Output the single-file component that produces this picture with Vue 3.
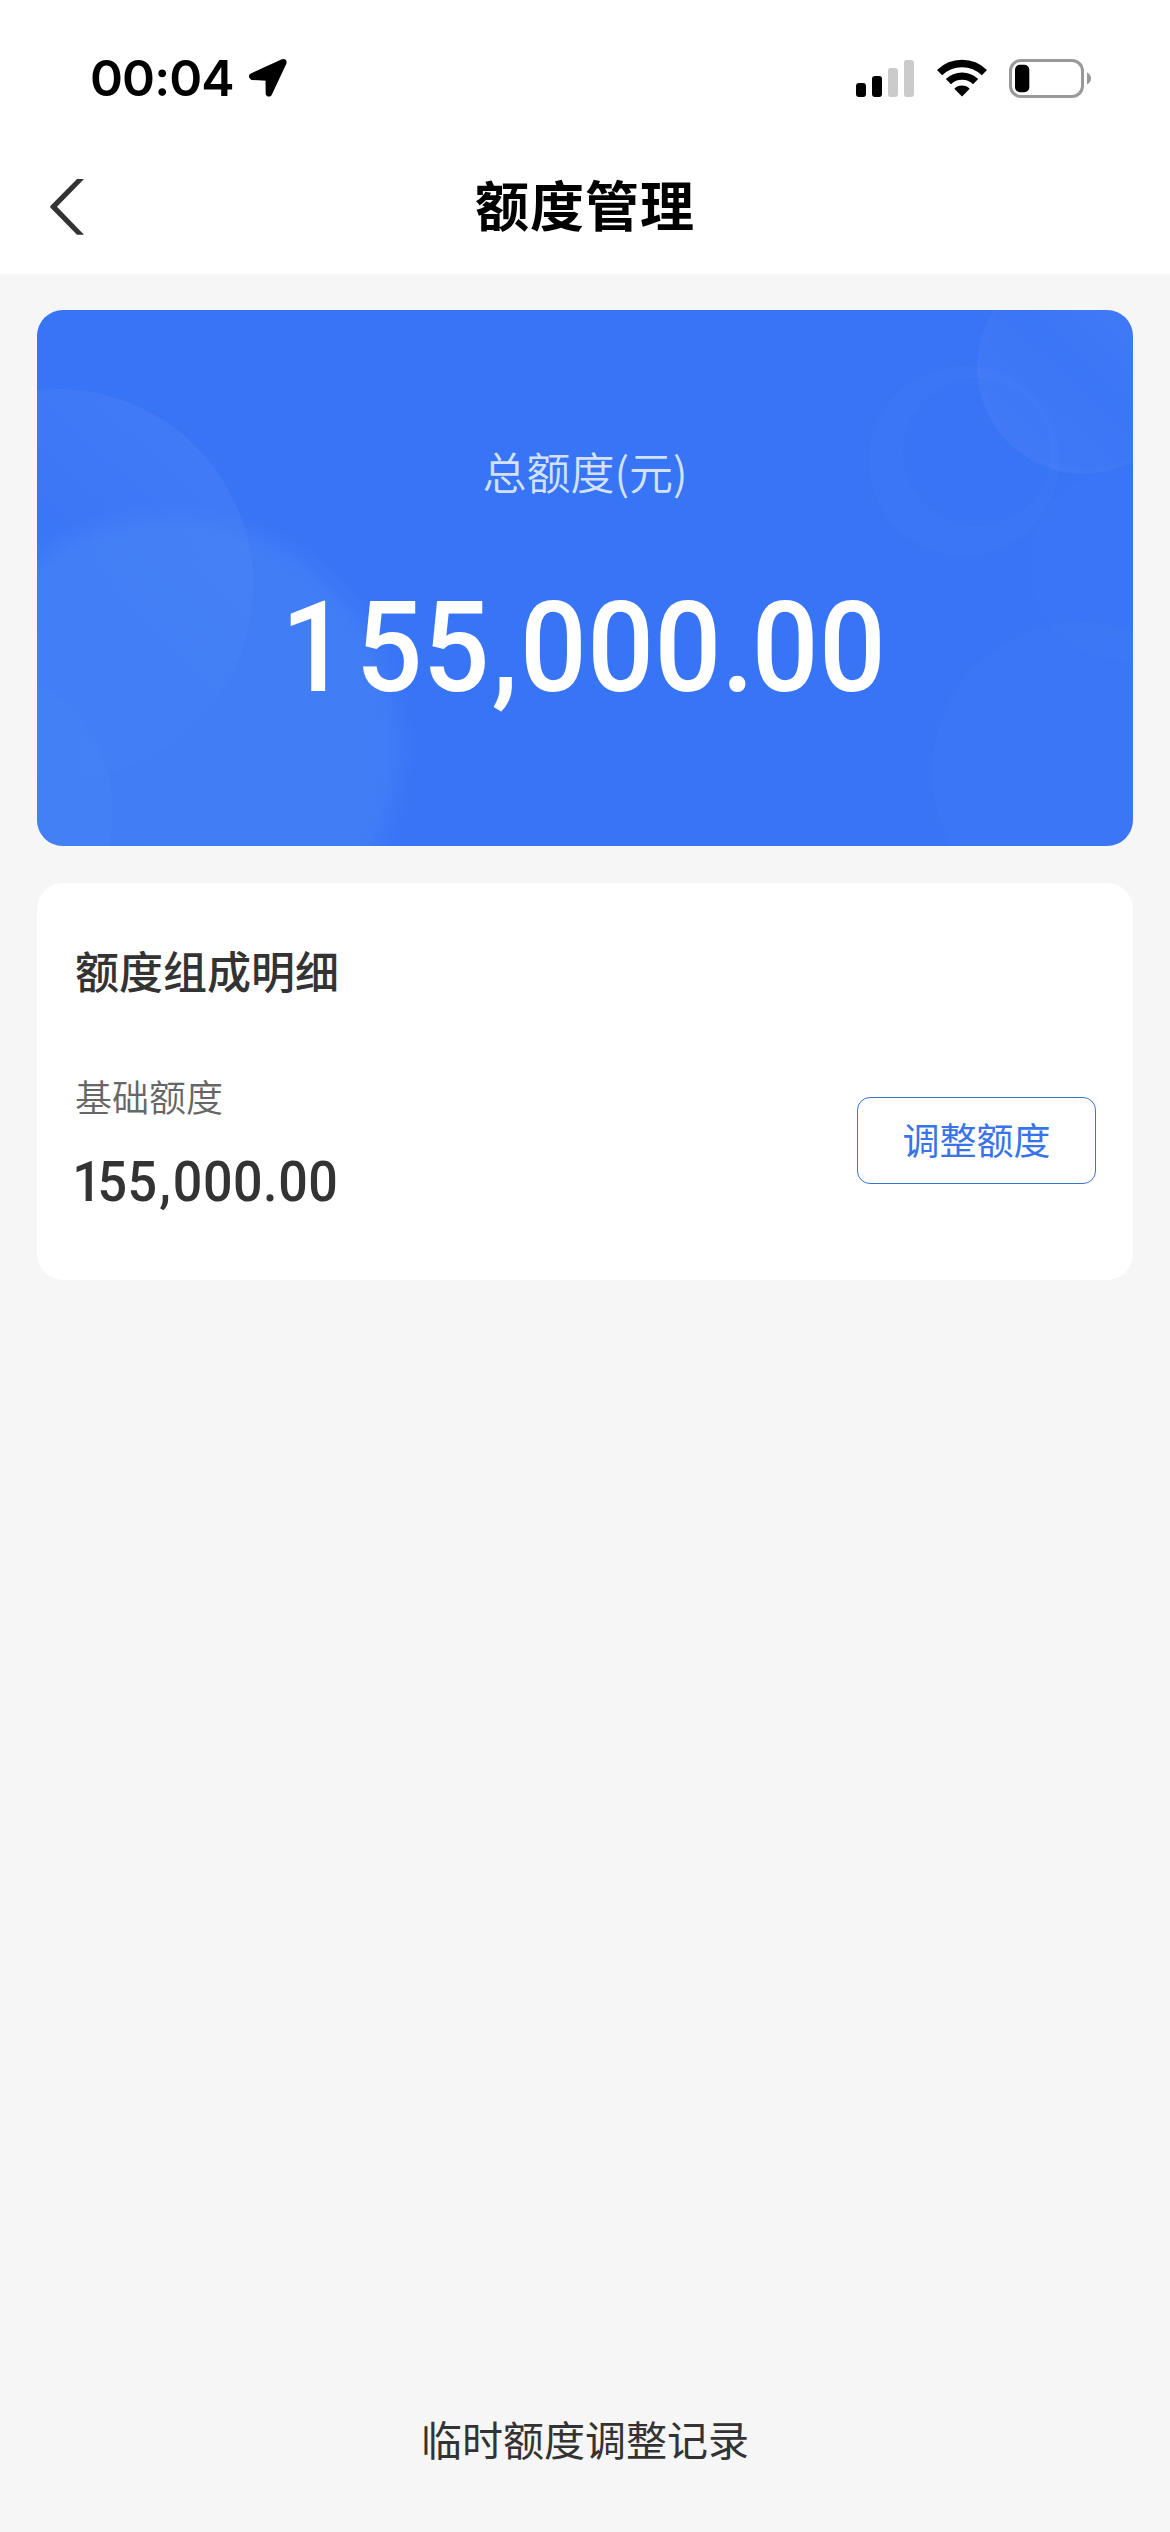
<script setup>
const title = '额度管理'
const total = '155,000.00'
const base = '155,000.00'

// Splits an amount so every glyph can sit in its own fixed cell.
const cells = (amount) =>
  [...amount].map((ch) => ({ ch, kind: ch === ',' ? 'comma' : ch === '.' ? 'dot' : ch === '1' ? 'one' : 'digit' }))
</script>

<template>
  <div class="page">
    <header class="top">
      <div class="status">
        <span class="clock">00:04</span>
        <svg class="location" width="40" height="40" viewBox="0 0 40 40">
          <path d="M3 17 L34.5 2.6 Q37.5 2 37 5 L22.2 36.5 Q20.8 38 19.2 36 L19 21.2 L4 20.5 Q1.500 19 3 17Z" fill="#000" stroke="#000" stroke-width="3" stroke-linejoin="round" />
        </svg>
        <svg class="signal" width="58" height="37" viewBox="0 0 58 37">
          <rect x="0" y="23" width="10" height="14" rx="3" />
          <rect x="16" y="16" width="10" height="21" rx="3" />
          <rect x="32" y="8" width="10" height="29" rx="3" fill="#cbcbcb" />
          <rect x="48" y="0" width="10" height="37" rx="3" fill="#cbcbcb" />
        </svg>
        <svg class="wifi" width="50" height="38" viewBox="0 0 50 38">
          <g fill="none" stroke="#000" stroke-width="7.400">
            <path d="M2.600 13.600 A32 32 0 0 1 47.400 13.600" />
            <path d="M11.400 22.700 A19.500 19.500 0 0 1 38.600 22.700" />
          </g>
          <path d="M25 37.500 L17.300 29.700 A11 11 0 0 1 32.700 29.700 Z" />
        </svg>
        <svg class="battery" width="83" height="39" viewBox="0 0 83 39">
          <rect x="1.500" y="1.500" width="72" height="36" rx="10.500" fill="none" stroke="#999" stroke-width="3" />
          <rect x="6" y="5.700" width="14.300" height="27.500" rx="5" />
          <path d="M78 13.600 Q82 15.500 82 19.500 Q82 23.500 78 25.400 Z" fill="#999" />
        </svg>
      </div>
      <nav class="nav">
        <svg class="back" width="34" height="56" viewBox="0 0 34 56">
          <path d="M27 0 L34 0 L7 27.700 L34 55.700 L27 55.700 L0.300 28.500 L0.300 27 Z" fill="#333" />
        </svg>
        <h1>{{ title }}</h1>
      </nav>
    </header>

    <main>
      <section class="hero">
        <svg class="bubbles" width="1096" height="536" viewBox="37 310 1096 536">
          <defs>
            <linearGradient id="ga" x1="0.850" y1="0.100" x2="0.300" y2="0.700">
              <stop offset="0" stop-color="#fff" stop-opacity=".05" />
              <stop offset=".6" stop-color="#fff" stop-opacity=".01" />
            </linearGradient>
            <radialGradient id="gb">
              <stop offset="0" stop-color="#5190f4" stop-opacity=".36" />
              <stop offset=".88" stop-color="#5190f4" stop-opacity=".34" />
              <stop offset="1" stop-color="#5190f4" stop-opacity="0" />
            </radialGradient>
            <linearGradient id="gd" x1="0.100" y1="0.950" x2="0.900" y2="0.100">
              <stop offset="0" stop-color="#fff" stop-opacity=".045" />
              <stop offset=".5" stop-color="#fff" stop-opacity=".015" />
              <stop offset="1" stop-color="#fff" stop-opacity=".06" />
            </linearGradient>
            <linearGradient id="gf" x1="0" y1="0" x2="0.600" y2="0.600">
              <stop offset="0" stop-color="#fff" stop-opacity=".018" />
              <stop offset="1" stop-color="#fff" stop-opacity=".012" />
            </linearGradient>
          </defs>
          <circle cx="57" cy="585" r="196" fill="url(#ga)" />
          <circle cx="168" cy="748" r="246" fill="url(#gb)" />
          <circle cx="-35" cy="812" r="148" fill="#fff" fill-opacity=".015" />
          <circle cx="1084" cy="367" r="107" fill="url(#gd)" />
          <circle cx="1084" cy="367" r="104" fill="none" stroke="#fff" stroke-opacity=".012" stroke-width="5" />
          <path fill="#fff" fill-opacity=".018" fill-rule="evenodd" d="M869 461a95 95 0 1 0 190 0a95 95 0 1 0 -190 0Z M903 452a74 74 0 1 0 148 0a74 74 0 1 0 -148 0Z" />
          <circle cx="1125" cy="565" r="96" fill="#fff" fill-opacity=".008" />
          <circle cx="1082" cy="772" r="150" fill="url(#gf)" />
        </svg>
        <p class="label">总额度(元)</p>
        <p class="amount big"><span v-for="(c, i) in cells(total)" :key="i" :class="c.kind">{{ c.ch }}</span></p>
      </section>

      <section class="detail">
        <h2>额度组成明细</h2>
        <div class="row">
          <div class="item">
            <p class="name">基础额度</p>
            <p class="amount small"><span v-for="(c, i) in cells(base)" :key="i" :class="c.kind">{{ c.ch }}</span></p>
          </div>
          <button type="button">调整额度</button>
        </div>
      </section>
    </main>

    <footer>临时额度调整记录</footer>
  </div>
</template>

<style>
body {
  margin: 0;
  background: #f6f6f6;
}
</style>

<style scoped>
.page {
  display: flex;
  flex-direction: column;
  width: 1170px;
  height: 2532px;
  overflow: hidden;
  background: #f6f6f6;
  font-family: "Noto Sans CJK SC", sans-serif;
  color: #333;
}
h1, h2, p {
  margin: 0;
}
.top {
  height: 274px;
  background: #fff;
}
.status {
  display: flex;
  align-items: center;
  height: 156px;
  padding-left: 90px;
  box-sizing: border-box;
}
.clock {
  width: 158px;
  font: 600 50px/60px Inter, sans-serif;
  letter-spacing: -0.900px;
  color: #000;
}
.signal {
  margin-left: 568px;
}
.wifi {
  margin-left: 22.500px;
}
.battery {
  margin-left: 22.500px;
}
.nav {
  display: flex;
  align-items: center;
  height: 101px;
  padding: 0 50px;
}
.back {
  flex: none;
}
h1 {
  flex: 1;
  margin: -5px 34px 0 0;
  text-align: center;
  font-size: 54px;
  line-height: 80px;
  font-weight: 700;
  letter-spacing: 1px;
  color: #000;
}
main {
  display: flex;
  flex-direction: column;
  gap: 37px;
  padding: 36px 37px 0;
}
.hero {
  position: relative;
  display: flex;
  flex-direction: column;
  align-items: center;
  height: 536px;
  box-sizing: border-box;
  padding-top: 129px;
  border-radius: 26px;
  overflow: hidden;
  background: #3874f6;
}
.bubbles {
  position: absolute;
  inset: 0;
}
.label {
  position: relative;
  font-size: 44px;
  line-height: 64px;
  font-weight: 350;
  color: #d3e2fc;
}
.amount {
  position: relative;
  display: flex;
  font-family: Roboto, sans-serif;
  font-weight: 500;
}
.amount span {
  flex: none;
  text-align: center;
}
.big {
  width: 639px;
  margin-top: 70px;
  font-size: 126.500px;
  line-height: 150px;
  color: #fff;
  transform: scaleX(0.930);
}
.big .digit,
.big .one {
  width: 72.200px;
}
.amount.big .one {
  margin: 0 8px 0 -8px;
}
.big .comma,
.big .dot {
  width: 32.500px;
}
.detail {
  height: 397px;
  box-sizing: border-box;
  padding: 55px 37px 0 38px;
  border-radius: 26px;
  background: #fff;
}
h2 {
  font-size: 44px;
  line-height: 64px;
  font-weight: 500;
}
.row {
  display: flex;
  justify-content: space-between;
  align-items: flex-start;
  padding-top: 67px;
}
.name {
  font-size: 37px;
  line-height: 54px;
  font-weight: 350;
  color: #666;
}
.small {
  margin-top: 26px;
  font-size: 56px;
  line-height: 66px;
  transform: scaleX(0.930);
  transform-origin: left;
}
.small .digit {
  width: 32.300px;
}
.amount.small .one {
  width: 27px;
  margin-left: -3px;
  text-align: left;
}
.small .comma,
.small .dot {
  width: 16.400px;
}
button {
  width: 239px;
  height: 87px;
  margin-top: 28px;
  padding: 0 0 3px;
  border: 1px solid #3b74cc;
  border-radius: 13px;
  background: #fff;
  font-family: inherit;
  font-size: 37px;
  line-height: 54px;
  font-weight: 400;
  color: #3874e8;
}
footer {
  margin-top: auto;
  padding-bottom: 64px;
  text-align: center;
  font-size: 41px;
  line-height: 60px;
}
</style>
